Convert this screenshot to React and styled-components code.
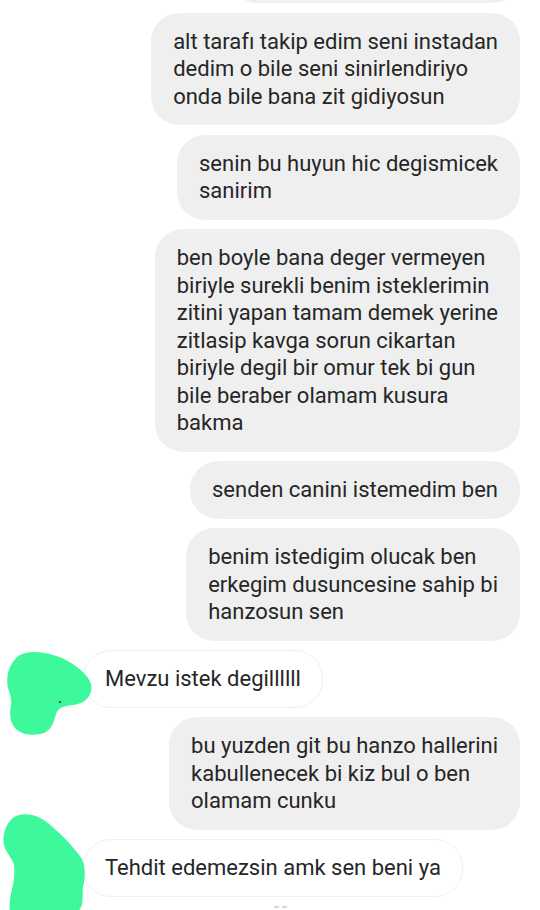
import React from "react";
import styled, { createGlobalStyle } from "styled-components";

const GlobalStyle = createGlobalStyle`
    html, body {
        margin: 0;
        padding: 0;
        background: #ffffff;
        overflow: hidden;
    }
    * {
        box-sizing: border-box;
    }
`;

const Thread = styled.div`
    width: 540px;
    height: 910px;
    overflow: hidden;
    display: flex;
    flex-direction: column;
    gap: 9.5px;
    padding: 8px 20px 0 0;
    font-family: Roboto, "Noto Sans", "Liberation Sans", sans-serif;
    color: #262626;
`;

const Row = styled.div`
    display: flex;
    justify-content: ${(p) => (p.$mine ? "flex-end" : "flex-start")};
    align-items: flex-start;
`;

const CutRow = styled(Row)`
    margin-top: -62px;
`;

const Bubble = styled.div`
    font-size: 22px;
    line-height: 27.5px;
    padding: 15px 22px;
    border-radius: 28px;
    background: #efefef;
    white-space: nowrap;
`;

const TheirBubble = styled(Bubble)`
    background: #ffffff;
    border: 1px solid #efefef;
    padding: 14px 21px;
`;

const CutBubble = styled(Bubble)`
    width: ${(p) => p.$width}px;
    height: 57px;
`;

const AvatarSlot = styled.div`
    position: relative;
    width: 83px;
    flex-shrink: 0;
    align-self: stretch;
`;

const Scribble = styled.svg`
    position: absolute;
    left: 0;
    top: ${(p) => p.$top}px;
`;

const Footer = styled.div`
    display: flex;
    justify-content: center;
    gap: 3px;
    padding-left: 40px;
`;

const Dash = styled.span`
    width: 5px;
    height: 2px;
    border-radius: 1px;
    background: #d4d4d4;
`;

const GREEN = "#3ef99b";

const messages = [
    { mine: true, lines: ["alt tarafı takip edim seni instadan", "dedim o bile seni sinirlendiriyo", "onda bile bana zit gidiyosun"] },
    { mine: true, lines: ["senin bu huyun hic degismicek", "sanirim"] },
    {
        mine: true,
        lines: [
            "ben boyle bana deger vermeyen",
            "biriyle surekli benim isteklerimin",
            "zitini yapan tamam demek yerine",
            "zitlasip kavga sorun cikartan",
            "biriyle degil bir omur tek bi gun",
            "bile beraber olamam kusura",
            "bakma",
        ],
    },
    { mine: true, lines: ["senden canini istemedim ben"] },
    { mine: true, lines: ["benim istedigim olucak ben", "erkegim dusuncesine sahip bi", "hanzosun sen"] },
    { mine: false, lines: ["Mevzu istek degillllll"], blob: 1 },
    { mine: true, lines: ["bu yuzden git bu hanzo hallerini", "kabullenecek bi kiz bul o ben", "olamam cunku"] },
    { mine: false, lines: ["Tehdit edemezsin amk sen beni ya"], blob: 2 },
];

function Blob({ kind }) {
    if (kind === 1) {
        return (
            <Scribble $top={-4} width="95" height="92" viewBox="0 0 95 92">
                <path
                    fill={GREEN}
                    d="M20 9 C30 4 45 5 62 12 C76 19 88 28 91 38 C93 47 88 55 78 58 C70 60 63 59 58 64 C54 70 55 80 46 86 C38 90 25 90 17 84 C10 78 9 68 11 60 C12 54 10 48 8 42 C6 32 8 17 20 9 Z"
                />
                <circle cx="60" cy="56" r="1.2" fill="#2a6b4a" />
            </Scribble>
        );
    }
    return (
        <Scribble $top={-26} width="95" height="100" viewBox="0 0 95 100">
            <path
                fill={GREEN}
                d="M16 3 C26 -1 38 2 48 10 C60 20 74 34 82 46 C86 56 85 66 83 74 C82 82 84 90 80 96 L78 100 L10 100 C9 92 10 84 12 76 C14 68 15 60 14 52 C13 46 6 40 4 32 C2 22 6 8 16 3 Z"
            />
        </Scribble>
    );
}

export default function App() {
    return (
        <>
            <GlobalStyle />
            <Thread>
                <CutRow $mine>
                    <CutBubble $width={291} />
                </CutRow>
                {messages.map((m, i) => {
                    const text = m.lines.map((line, j) => (
                        <React.Fragment key={j}>
                            {j > 0 && <br />}
                            {line}
                        </React.Fragment>
                    ));
                    return m.mine ? (
                        <Row key={i} $mine>
                            <Bubble>{text}</Bubble>
                        </Row>
                    ) : (
                        <Row key={i}>
                            <AvatarSlot>
                                <Blob kind={m.blob} />
                            </AvatarSlot>
                            <TheirBubble>{text}</TheirBubble>
                        </Row>
                    );
                })}
                <Footer>
                    <Dash />
                    <Dash />
                </Footer>
            </Thread>
        </>
    );
}
